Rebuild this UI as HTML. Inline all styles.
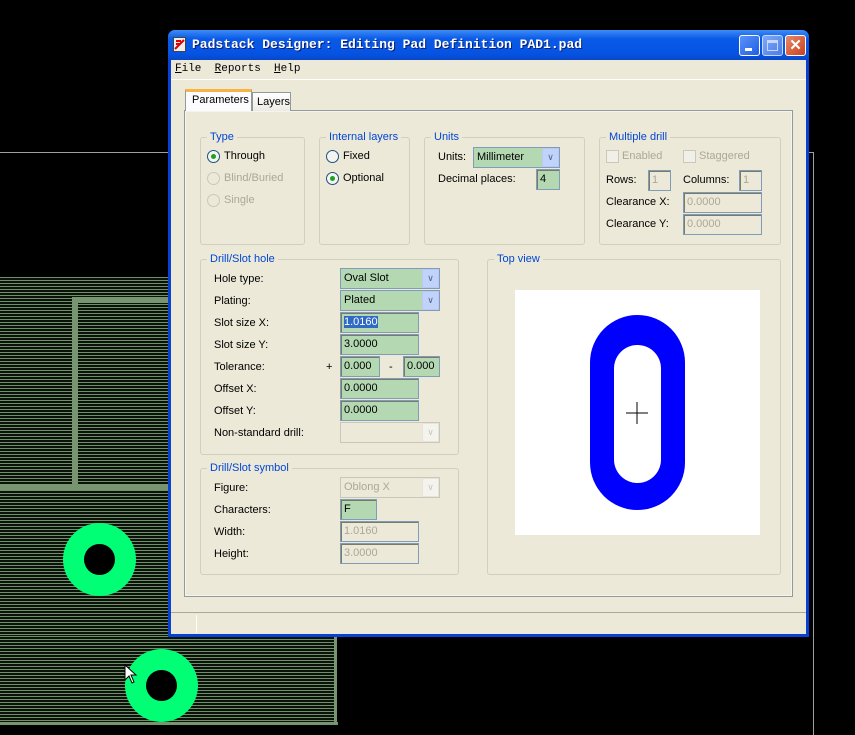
<!DOCTYPE html>
<html><head><meta charset="utf-8">
<style>
*{margin:0;padding:0;box-sizing:border-box}
body{width:855px;height:735px;background:#000;position:relative;overflow:hidden;font-family:"Liberation Sans",sans-serif;font-size:11px;color:#000}
.a{position:absolute}
.hatch{background:repeating-linear-gradient(to bottom,#6e8f69 0,#6e8f69 1px,#0b120a 1px,#0b120a 3px)}
.g{background:#77966f}
.grp{position:absolute;border:1px solid #d0d0bf;border-radius:3px}
.grp>.t{position:absolute;top:-8px;left:6px;background:#ece9d8;color:#0046d5;padding:0 3px;font-size:11px;line-height:14px}
.lbl{position:absolute;font-size:11px;line-height:13px}
.dis{color:#aca899}
.in{position:absolute;height:21px;background:#b4d9b2;border:1px solid #7f9db9;box-shadow:inset 1px 1px 0 #7a7a6a;font-size:11px;line-height:18px;padding-left:3px}
.in.d{background:#ece9d8;color:#aca899}
.cb{position:absolute;height:21px;background:#b4d9b2;border:1px solid #7f9db9;font-size:11px;line-height:19px;padding-left:3px}
.cb .btn{position:absolute;right:0;top:0;width:17px;height:19px;background:#c1d3fb;border:1px solid #b9c9ef;color:#4d6185;font-size:9px;text-align:center;line-height:17px}
.cb.d{background:#ece9d8;color:#aca899;border-color:#c9c7ba}
.cb.d .btn{background:#f4f3ee;border-color:#e6e4da;color:#c9c7ba}
.rad{position:absolute;width:13px;height:13px;border-radius:50%;border:1px solid #1c5180;background:#f4f4f0}
.rad.on::after{content:"";position:absolute;left:3px;top:3px;width:5px;height:5px;border-radius:50%;background:#21a121}
.rad.d{border-color:#cac8bb;background:#ece9d8}
.chk{position:absolute;width:13px;height:13px;border:1px solid #cac8bb;background:#f0efe8}
</style></head><body>
<!-- background lines -->
<div class="a" style="left:0;top:152px;width:170px;height:1px;background:#a0a0a0"></div>
<div class="a" style="left:808px;top:152px;width:6px;height:1px;background:#a0a0a0"></div>
<div class="a" style="left:813px;top:152px;width:1px;height:583px;background:#a0a0a0"></div>
<!-- pcb hatch -->
<div class="a hatch" style="left:0;top:277px;width:170px;height:360px"></div>
<div class="a hatch" style="left:0;top:636px;width:336px;height:88px"></div>
<div class="a g" style="left:0;top:722px;width:338px;height:3px"></div>
<div class="a g" style="left:334px;top:636px;width:3px;height:89px"></div>
<div class="a g" style="left:72px;top:297px;width:6px;height:190px"></div>
<div class="a g" style="left:72px;top:297px;width:98px;height:6px"></div>
<div class="a g" style="left:0;top:484px;width:170px;height:6px"></div>
<div class="a" style="left:63px;top:523px;width:73px;height:73px;border-radius:50%;background:#00ff74"></div>
<div class="a" style="left:84px;top:544px;width:31px;height:31px;border-radius:50%;background:#000"></div>
<div class="a" style="left:125px;top:649px;width:73px;height:73px;border-radius:50%;background:#00ff74"></div>
<div class="a" style="left:146px;top:670px;width:31px;height:31px;border-radius:50%;background:#000"></div>
<svg class="a" style="left:124px;top:664px" width="14" height="22"><path d="M1 1 L1 16 L5 12 L8 19 L10 18 L7 11 L12 11 Z" fill="#fff" stroke="#000"/></svg>

<!-- window -->
<div class="a" style="left:168px;top:30px;width:641px;height:607px;background:#0842d4;border-radius:7px 7px 0 0"></div>
<div class="a" style="left:168px;top:30px;width:641px;height:30px;border-radius:7px 7px 0 0;background:linear-gradient(#3d8cf6,#0a5ae8 30%,#0553e2 80%,#0847c6)"></div>
<svg class="a" style="left:173px;top:37px" width="14" height="16"><rect x="0.5" y="0.5" width="12" height="14" fill="#eee" stroke="#444"/><path d="M2 12 L11 3 M3 4 h5 M3 7 h4" stroke="#d00" stroke-width="2"/></svg>
<div class="a" style="left:192px;top:37px;color:#fff;font-family:'Liberation Mono',monospace;font-weight:bold;font-size:13px;text-shadow:1px 1px 0 #0a1e6e">Padstack Designer: Editing Pad Definition PAD1.pad</div>
<div class="a" style="left:739px;top:35px;width:21px;height:21px;border:1px solid #fff;border-radius:3px;background:linear-gradient(135deg,#5b93f8,#1f5ee6)"><div class="a" style="left:5px;top:12px;width:7px;height:3px;background:#fff"></div></div>
<div class="a" style="left:762px;top:35px;width:21px;height:21px;border:1px solid #c6d7fb;border-radius:3px;background:linear-gradient(135deg,#7ea8f8,#4b7de8)"><div class="a" style="left:4px;top:4px;width:11px;height:11px;border:1px solid #c6d7fb;border-top-width:3px"></div></div>
<div class="a" style="left:785px;top:35px;width:21px;height:21px;border:1px solid #fff;border-radius:3px;background:linear-gradient(135deg,#e88a6c,#c8401c);color:#fff;font-weight:bold;font-size:15px;text-align:center;line-height:19px">✕</div>
<!-- client -->
<div class="a" style="left:171px;top:60px;width:635px;height:574px;background:#ece9d8"></div>
<div class="a" style="left:175px;top:63px;font-family:'Liberation Mono',monospace;font-size:11px"><u>F</u>ile&nbsp; <u>R</u>eports&nbsp; <u>H</u>elp</div>
<div class="a" style="left:171px;top:79px;width:635px;height:1px;background:#fff"></div>
<!-- tab panel -->
<div class="a" style="left:184px;top:110px;width:609px;height:487px;border:1px solid #919b9c;background:#f5f4ed"></div>
<div class="a" style="left:186px;top:112px;width:605px;height:483px;background:#ece9d8"></div>
<div class="a" style="left:252px;top:92px;width:39px;height:19px;border:1px solid #919b9c;border-bottom:none;background:linear-gradient(#fff,#ecebe5);padding:3px 0 0 4px">Layers</div>
<div class="a" style="left:185px;top:89px;width:67px;height:22px;border:1px solid #919b9c;border-top:3px solid #f8b440;border-bottom:none;background:#fcfcfe;padding:2px 0 0 6px">Parameters</div>

<!-- Type -->
<div class="grp" style="left:200px;top:137px;width:105px;height:108px"><span class="t">Type</span></div>
<div class="rad on" style="left:207px;top:150px"></div><div class="lbl" style="left:224px;top:150px">Through</div>
<div class="rad d" style="left:207px;top:172px"></div><div class="lbl dis" style="left:224px;top:172px">Blind/Buried</div>
<div class="rad d" style="left:207px;top:194px"></div><div class="lbl dis" style="left:224px;top:194px">Single</div>
<!-- Internal -->
<div class="grp" style="left:319px;top:137px;width:91px;height:108px"><span class="t">Internal layers</span></div>
<div class="rad" style="left:326px;top:150px"></div><div class="lbl" style="left:343px;top:150px">Fixed</div>
<div class="rad on" style="left:326px;top:172px"></div><div class="lbl" style="left:343px;top:172px">Optional</div>
<!-- Units -->
<div class="grp" style="left:424px;top:137px;width:161px;height:108px"><span class="t">Units</span></div>
<div class="lbl" style="left:438px;top:151px">Units:</div>
<div class="cb" style="left:473px;top:147px;width:87px">Millimeter<div class="btn">&#8744;</div></div>
<div class="lbl" style="left:438px;top:173px">Decimal places:</div>
<div class="in" style="left:536px;top:169px;width:24px">4</div>
<!-- Multiple drill -->
<div class="grp" style="left:599px;top:137px;width:182px;height:108px"><span class="t">Multiple drill</span></div>
<div class="chk" style="left:606px;top:150px"></div><div class="lbl dis" style="left:622px;top:150px">Enabled</div>
<div class="chk" style="left:683px;top:150px"></div><div class="lbl dis" style="left:699px;top:150px">Staggered</div>
<div class="lbl" style="left:606px;top:174px">Rows:</div><div class="in d" style="left:648px;top:170px;width:23px">1</div>
<div class="lbl" style="left:683px;top:174px">Columns:</div><div class="in d" style="left:739px;top:170px;width:23px">1</div>
<div class="lbl" style="left:606px;top:196px">Clearance X:</div><div class="in d" style="left:683px;top:192px;width:79px">0.0000</div>
<div class="lbl" style="left:606px;top:218px">Clearance Y:</div><div class="in d" style="left:683px;top:214px;width:79px">0.0000</div>
<!-- Drill/Slot hole -->
<div class="grp" style="left:200px;top:259px;width:259px;height:196px"><span class="t">Drill/Slot hole</span></div>
<div class="lbl" style="left:214px;top:273px">Hole type:</div><div class="cb" style="left:340px;top:268px;width:100px">Oval Slot<div class="btn">&#8744;</div></div>
<div class="lbl" style="left:214px;top:295px">Plating:</div><div class="cb" style="left:340px;top:290px;width:100px">Plated<div class="btn">&#8744;</div></div>
<div class="lbl" style="left:214px;top:317px">Slot size X:</div><div class="in" style="left:340px;top:312px;width:79px"><span style="background:#316ac5;color:#fff">1.0160</span></div>
<div class="lbl" style="left:214px;top:339px">Slot size Y:</div><div class="in" style="left:340px;top:334px;width:79px">3.0000</div>
<div class="lbl" style="left:214px;top:361px">Tolerance:</div><div class="lbl" style="left:326px;top:361px">+</div>
<div class="in" style="left:340px;top:356px;width:40px">0.000</div><div class="lbl" style="left:389px;top:361px">-</div>
<div class="in" style="left:403px;top:356px;width:37px">0.000</div>
<div class="lbl" style="left:214px;top:383px">Offset X:</div><div class="in" style="left:340px;top:378px;width:79px">0.0000</div>
<div class="lbl" style="left:214px;top:405px">Offset Y:</div><div class="in" style="left:340px;top:400px;width:79px">0.0000</div>
<div class="lbl" style="left:214px;top:427px">Non-standard drill:</div><div class="cb d" style="left:340px;top:422px;width:100px"><div class="btn">&#8744;</div></div>
<!-- Drill/Slot symbol -->
<div class="grp" style="left:200px;top:468px;width:259px;height:107px"><span class="t">Drill/Slot symbol</span></div>
<div class="lbl" style="left:214px;top:482px">Figure:</div><div class="cb d" style="left:340px;top:477px;width:100px">Oblong X<div class="btn">&#8744;</div></div>
<div class="lbl" style="left:214px;top:504px">Characters:</div><div class="in" style="left:340px;top:499px;width:37px">F</div>
<div class="lbl" style="left:214px;top:526px">Width:</div><div class="in d" style="left:340px;top:521px;width:79px">1.0160</div>
<div class="lbl" style="left:214px;top:548px">Height:</div><div class="in d" style="left:340px;top:543px;width:79px">3.0000</div>
<!-- Top view -->
<div class="grp" style="left:487px;top:259px;width:294px;height:316px"><span class="t">Top view</span></div>
<div class="a" style="left:515px;top:290px;width:245px;height:245px;background:#fff"></div>
<svg class="a" style="left:515px;top:290px" width="245" height="245">
<rect x="75" y="25" width="95" height="195" rx="47.5" fill="#0000ff"/>
<rect x="99" y="55" width="47" height="138" rx="23.5" fill="#fff"/>
<path d="M122 112 v22 M111 123 h22" stroke="#000" stroke-width="1"/>
</svg>
<!-- status bar -->
<div class="a" style="left:171px;top:612px;width:635px;height:1px;background:#aca899"></div>
<div class="a" style="left:171px;top:613px;width:635px;height:20px;background:#ece9d8"></div>
<div class="a" style="left:196px;top:615px;width:1px;height:18px;background:#fff"></div>
</body></html>
